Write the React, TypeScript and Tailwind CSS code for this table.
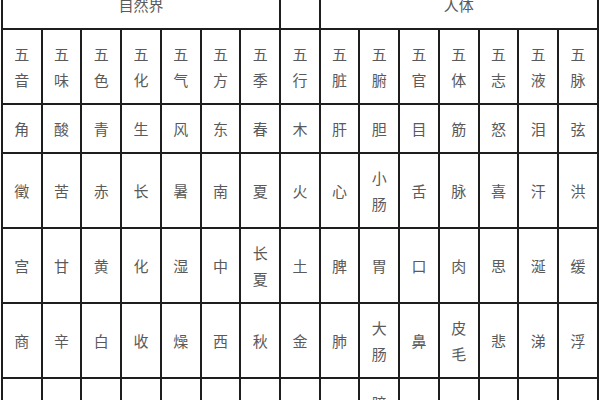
import React from "react";

const rows: string[][] = [
  ["五\n音", "五\n味", "五\n色", "五\n化", "五\n气", "五\n方", "五\n季", "五\n行", "五\n脏", "五\n腑", "五\n官", "五\n体", "五\n志", "五\n液", "五\n脉"],
  ["角", "酸", "青", "生", "风", "东", "春", "木", "肝", "胆", "目", "筋", "怒", "泪", "弦"],
  ["徵", "苦", "赤", "长", "暑", "南", "夏", "火", "心", "小\n肠", "舌", "脉", "喜", "汗", "洪"],
  ["宫", "甘", "黄", "化", "湿", "中", "长\n夏", "土", "脾", "胃", "口", "肉", "思", "涎", "缓"],
  ["商", "辛", "白", "收", "燥", "西", "秋", "金", "肺", "大\n肠", "鼻", "皮\n毛", "悲", "涕", "浮"],
  ["羽", "咸", "黑", "藏", "寒", "北", "冬", "水", "肾", "膀\n胱", "耳", "骨", "恐", "唾", "沉"],
];

const cell = "border-2 border-[#1e1e1e] px-0 py-[10.5px] text-center align-middle leading-[26px]";

function Txt({ t }: { t: string }) {
  const parts = t.split("\n");
  return (
    <>
      {parts.map((p, i) => (
        <React.Fragment key={i}>
          {i > 0 && <br />}
          {p}
        </React.Fragment>
      ))}
    </>
  );
}

export default function App() {
  return (
    <div className="w-[600px] h-[400px] overflow-hidden bg-white">
      <table
        className="table-fixed border-collapse w-[598px] ml-[1px] -mt-[21px] text-[15px] text-[#5a5a5a]"
        style={{ fontFamily: '"Noto Sans CJK SC", "Noto Sans", sans-serif' }}
      >
        <colgroup>
          {Array.from({ length: 15 }).map((_, i) => (
            <col key={i} />
          ))}
        </colgroup>
        <tbody>
          <tr>
            <td colSpan={7} className={cell}>
              自然界
            </td>
            <td className={cell}></td>
            <td colSpan={7} className={cell}>
              人体
            </td>
          </tr>
          {rows.map((r, ri) => (
            <tr key={ri}>
              {r.map((c, ci) => (
                <td key={ci} className={cell}>
                  <Txt t={c} />
                </td>
              ))}
            </tr>
          ))}
        </tbody>
      </table>
    </div>
  );
}
